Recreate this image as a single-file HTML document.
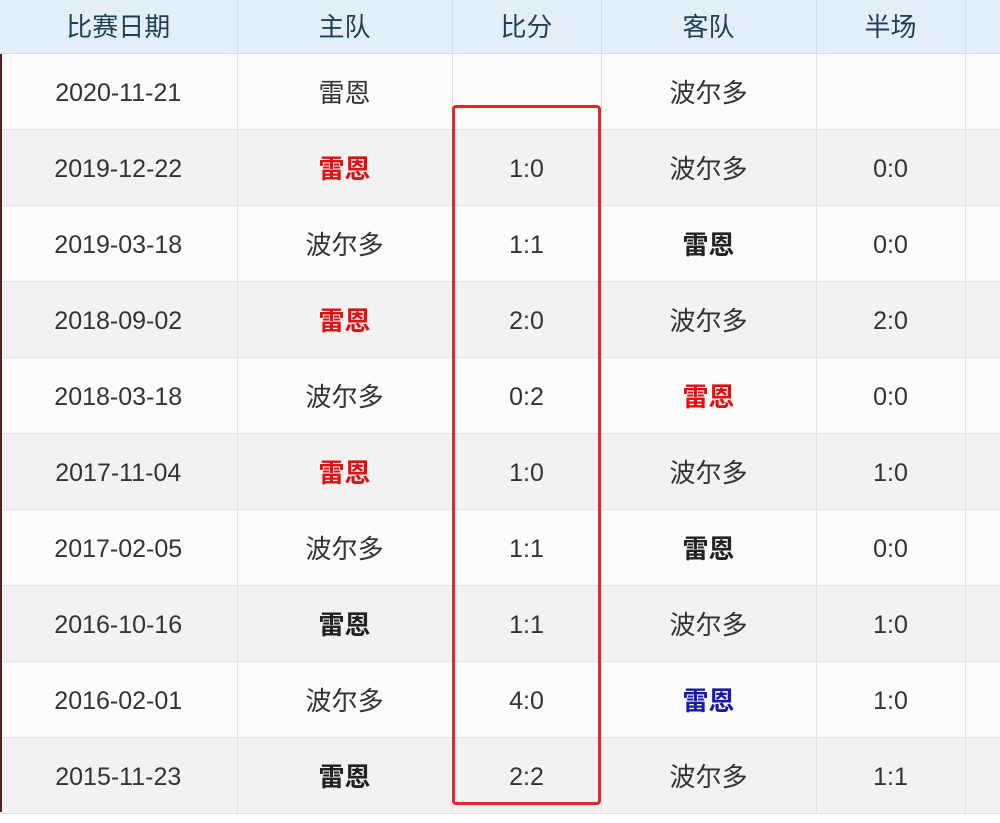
<!DOCTYPE html><html><head><meta charset="utf-8"><style>
body{margin:0;width:1000px;height:823px;background:#fff;overflow:hidden;position:relative;font-family:"Liberation Sans","Noto Sans CJK SC",sans-serif;}
table{position:absolute;left:0;top:0;border-collapse:collapse;table-layout:fixed;width:1000px;}
td,th{border-right:1px solid #dfe1e4;border-bottom:1px solid #e2e3e6;text-align:center;padding:0;font-size:25px;color:#333;line-height:30px;}
td{padding-top:3px;height:72px;}
th{height:53px;background:#e3eef8;color:#1e3f58;font-weight:normal;border-right:1px solid #d3dde6;border-bottom:1px solid #cfdbe6;font-size:26px;}
td.c{font-size:26px;}
tr:nth-child(odd) td{background:#f2f2f4;}
tr:nth-child(even) td{background:#fbfbfc;}
.r{color:#e01010;font-weight:bold}.b{font-weight:bold;color:#222}.u{color:#1a1aa8;font-weight:bold}
.bar{position:absolute;left:0;top:54px;width:2px;height:758px;background:#5a1e1e;}
.box{position:absolute;left:452px;top:105px;width:143px;height:694px;border:3px solid #e02a2a;border-radius:4px;}
</style></head><body>
<table>
<colgroup><col style="width:237px"><col style="width:215px"><col style="width:149px"><col style="width:215px"><col style="width:149px"><col style="width:35px"></colgroup>
<tr><th>比赛日期</th><th>主队</th><th>比分</th><th>客队</th><th>半场</th><th></th></tr>
<tr><td>2020-11-21</td><td class="c">雷恩</td><td></td><td class="c">波尔多</td><td></td><td></td></tr>
<tr><td>2019-12-22</td><td class="c r">雷恩</td><td>1:0</td><td class="c">波尔多</td><td>0:0</td><td></td></tr>
<tr><td>2019-03-18</td><td class="c">波尔多</td><td>1:1</td><td class="c b">雷恩</td><td>0:0</td><td></td></tr>
<tr><td>2018-09-02</td><td class="c r">雷恩</td><td>2:0</td><td class="c">波尔多</td><td>2:0</td><td></td></tr>
<tr><td>2018-03-18</td><td class="c">波尔多</td><td>0:2</td><td class="c r">雷恩</td><td>0:0</td><td></td></tr>
<tr><td>2017-11-04</td><td class="c r">雷恩</td><td>1:0</td><td class="c">波尔多</td><td>1:0</td><td></td></tr>
<tr><td>2017-02-05</td><td class="c">波尔多</td><td>1:1</td><td class="c b">雷恩</td><td>0:0</td><td></td></tr>
<tr><td>2016-10-16</td><td class="c b">雷恩</td><td>1:1</td><td class="c">波尔多</td><td>1:0</td><td></td></tr>
<tr><td>2016-02-01</td><td class="c">波尔多</td><td>4:0</td><td class="c u">雷恩</td><td>1:0</td><td></td></tr>
<tr><td>2015-11-23</td><td class="c b">雷恩</td><td>2:2</td><td class="c">波尔多</td><td>1:1</td><td></td></tr>
</table>
<div class="bar"></div><div class="box"></div>
</body></html>
